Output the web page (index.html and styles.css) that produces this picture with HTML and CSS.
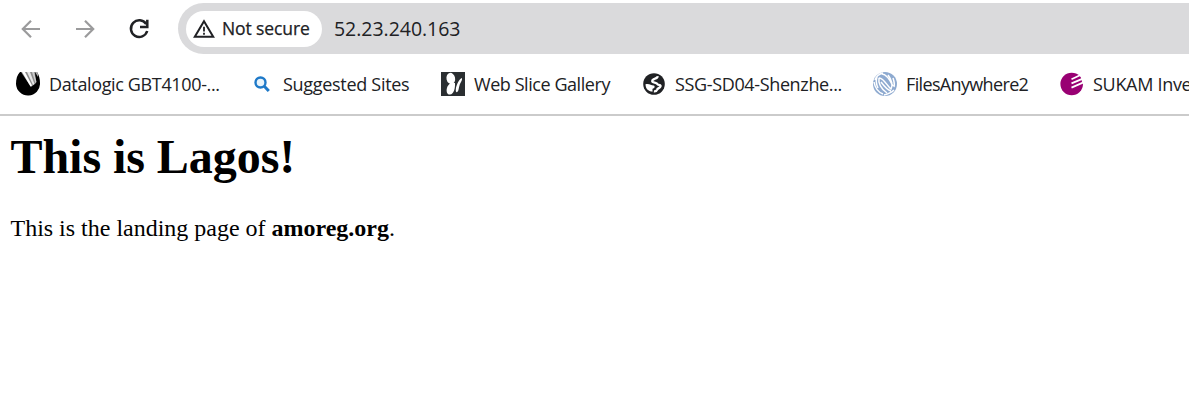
FILE: index.html
```html
<!DOCTYPE html>
<html lang="en">
<head>
<meta charset="utf-8">
<title>52.23.240.163</title>
<link rel="stylesheet" href="styles.css">
</head>
<body>
<header class="browser">
  <div class="toolbar">
    <nav class="nav">
      <svg class="nav-icon muted" viewBox="0 0 24 24"><path d="M21 12H4M12 3.800L3.800 12l8.200 8.200"/></svg>
      <svg class="nav-icon muted" viewBox="0 0 24 24"><path d="M3 12h17M12 3.800l8.200 8.200-8.200 8.200"/></svg>
      <svg class="nav-icon reload" viewBox="0 0 24 24"><path d="M19.200 7.100A8.300 8.300 0 1 0 20.200 14"/><path d="M20.300 2.800v7.300h-7.300"/></svg>
    </nav>
    <div class="omnibox">
      <div class="chip">
        <svg class="warning" viewBox="0 0 22 20"><path class="outline" d="M11 2.300L20.200 17.800H1.800z"/><path class="mark" d="M11 7.800v4.800M11 13.800v2"/></svg>
        <span class="chip-label">Not secure</span>
      </div>
      <span class="address">52.23.240.163</span>
    </div>
  </div>
  <div class="bookmarks">
    <a class="bookmark datalogic">
      <svg class="favicon" viewBox="0 0 24 24">
        <defs><clipPath id="scan"><path d="M4 0h17c2 3 3 7 3 11a12 12 0 0 1-24 1C0 7 1 3 4 0z"/></clipPath></defs>
        <g clip-path="url(#scan)"><path d="M0 0h24v24H0z" fill="#000"/><path d="M5 0h14l1 11-5 4z" fill="#8d8d8d"/><path d="M6 0h3l7 13.500-1.500 1z" fill="#fff"/><path d="M11 0h3l4.500 12-1.500 1z" fill="#e6e6e6"/><path d="M16 0h2l2.500 10-1 1z" fill="#ccc"/><path d="M19 0h3v5z" fill="#aaa"/></g>
      </svg>
      <span class="label">Datalogic GBT4100-...</span>
    </a>
    <a class="bookmark suggested">
      <svg class="favicon" viewBox="0 0 24 24"><circle cx="10.500" cy="10.500" r="5" fill="#e9f4fb" stroke="#1e79c8" stroke-width="2.400"/><path d="M14.500 14.500l4.300 4.500" stroke="#1e79c8" stroke-width="3"/></svg>
      <span class="label">Suggested Sites</span>
    </a>
    <a class="bookmark slice">
      <svg class="favicon" viewBox="0 0 24 24"><path d="M0 0h24v24H0z" fill="#2a2e31"/><ellipse cx="9.800" cy="6.500" rx="4.300" ry="5.700" transform="rotate(-12 9.800 6.500)" fill="#fff"/><path d="M8 10l6 1c.3 5-1 11-5 11.600-3 .3-4-3.600-3-6.600.5-2 1.500-3.500 3.500-4.500z" fill="#fff"/><path d="M20.800 6c-2 .5-5.600 6.500-6 11.500-.2 2.500.7 3.300 1.700 2.300 1.200-1.200 1.200-3.800 2-6.300.6-2.500 3.400-5.500 2.300-7.500z" fill="#fff"/></svg>
      <span class="label">Web Slice Gallery</span>
    </a>
    <a class="bookmark ssg">
      <svg class="favicon" viewBox="0 0 24 24"><circle cx="12" cy="12" r="10.800" fill="#202124"/><path d="M15.500 4.200c.3 2-1.700 2-2.800 2.600-1.200.6-2.500.8-2.500 2.200 0 2.200 4.600 1.200 5.400 3.400.3.800 3.500-.2 2.900 2-.5 1.900-2.900 1.500-3.400 3.200-.5 1.400-1.700 2-3.200 1.800" stroke="#fff" stroke-width="2.300" fill="none"/><path d="M3.500 12.200c4-.8 5.500 1.200 8 1.200 1.600 0 1.500 2.600-.4 3.100-.8.300-.8 1.300-.4 3C6 19.500 3.600 16.500 3.500 12.200z" fill="#fff"/></svg>
      <span class="label">SSG-SD04-Shenzhe...</span>
    </a>
    <a class="bookmark files">
      <svg class="favicon" viewBox="0 0 24 24"><circle cx="12" cy="12" r="12" fill="#8eaad0"/><g fill="none" stroke="#fff" stroke-width="1.500"><path d="M6 6c4-1 9 9 12 11 2-3 1-9-3-14M6 6c-1 5 2 11 8 15M1 10c1 6 4 10 9 12M9 2c5 0 9 8 11 12M4 5c-1 3-1 7 1 11M20 6c1 3 2 6 1 9M8 10c3 4 6 8 10 9M11 23c4-1 7-2 10-5M2 8C3 5 6 2 10 1"/></g></svg>
      <span class="label">FilesAnywhere2</span>
    </a>
    <a class="bookmark sukam">
      <svg class="favicon" viewBox="0 0 24 24"><circle cx="11.700" cy="12" r="11.300" fill="#990073"/><path d="M11.500 7.200L21 2.800M11.500 11.400l12-5.100M11.500 15.600l12-5.200" stroke="#fff" stroke-width="1.800"/><path d="M20 0h4v10h-2z" fill="#fff"/></svg>
      <span class="label">SUKAM Inve</span>
    </a>
  </div>
</header>
<main class="page">
  <h1 class="title">This is Lagos!</h1>
  <p class="intro">This is the landing page of <b>amoreg.org</b>.</p>
</main>
</body>
</html>
```
FILE: styles.css
```css
body {
  margin: 0;
  overflow: hidden;
  background: #fff;
  color: #000;
  font-family: "Liberation Serif", serif;
}
.browser {
  box-sizing: border-box;
  height: 116px;
  border-bottom: 2px solid #cbcbcb;
  color: #202124;
  font-family: "Open Sans", "Noto Sans", sans-serif;
  white-space: nowrap;
}
.toolbar {
  display: flex;
  padding-top: 3px;
}
.nav {
  display: flex;
  align-items: center;
  gap: 30px;
  width: 159px;
  padding-left: 19px;
}
.nav-icon {
  width: 24px;
  height: 24px;
  fill: none;
  stroke: #202124;
  stroke-width: 2.5;
}
.muted {
  stroke: #9b9b9c;
  stroke-width: 2.2;
}
.omnibox {
  display: flex;
  flex: 1;
  align-items: center;
  box-sizing: border-box;
  height: 51px;
  padding-left: 8px;
  border-radius: 26px 0 0 26px;
  background: #dadadc;
}
.chip {
  display: flex;
  align-items: center;
  box-sizing: border-box;
  width: 136px;
  height: 36px;
  padding-left: 7px;
  border-radius: 18px;
  background: #fff;
}
.warning {
  width: 22px;
  height: 20px;
  margin-right: 7px;
  fill: none;
  stroke: #202124;
}
.outline { stroke-width: 2; }
.mark { stroke-width: 1.8; }
.chip-label {
  padding-bottom: 1px;
  font-size: 17.5px;
  font-weight: 500;
  letter-spacing: -0.1px;
  -webkit-text-stroke: 0.25px #202124;
}
.address {
  margin-left: 12px;
  padding-bottom: 1px;
  font-size: 19.5px;
  letter-spacing: -0.03px;
}
.bookmarks {
  display: flex;
  align-items: center;
  height: 60px;
  padding-left: 16px;
}
.bookmark {
  display: flex;
  flex: none;
  align-items: center;
  gap: 9px;
}
.favicon {
  flex: none;
  width: 24px;
  height: 24px;
}
.label {
  padding-bottom: 1px;
  font-size: 18px;
  letter-spacing: -0.3px;
}
.datalogic { width: 234px; letter-spacing: -0.36px; }
.suggested { width: 191px; }
.slice { width: 201px; }
.ssg { width: 231px; }
.files { width: 187px; }
.datalogic .label,
.ssg .label { letter-spacing: -0.36px; }
.slice .label { letter-spacing: -0.44px; }
.files .label { letter-spacing: -0.65px; }
.page {
  padding: 13px 10.5px;
}
.title {
  margin: 0;
  font-size: 48px;
  line-height: 56px;
  letter-spacing: -0.05px;
}
.intro {
  margin: 29px 0 0;
  font-size: 24px;
  line-height: 28px;
  letter-spacing: -0.01px;
}
```
